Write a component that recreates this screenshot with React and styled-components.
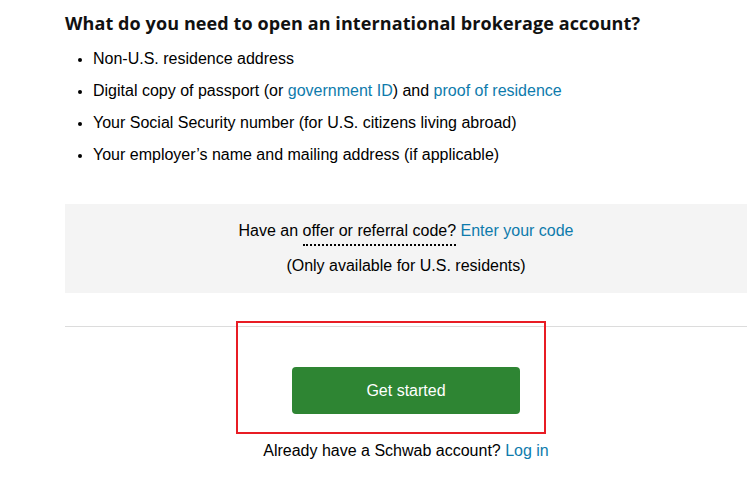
import React from "react";
import styled, { createGlobalStyle } from "styled-components";

const Global = createGlobalStyle`
  html, body { margin: 0; padding: 0; background: #fff; }
  body { font-family: "Liberation Sans", Arial, sans-serif; color: #000; }
`;

const Page = styled.main`
  padding: 12px 0 0 65px;
  width: 747px;
  box-sizing: border-box;
`;

const Heading = styled.h2`
  margin: 0;
  font-family: "Open Sans", "Liberation Sans", Arial, sans-serif;
  font-weight: 700;
  font-size: 18px;
  line-height: 22px;
  letter-spacing: 0.1px;
  color: #111;
`;

const List = styled.ul`
  margin: 15px 0 0;
  padding: 0 0 0 28px;
  font-size: 16px;
  line-height: 20px;
  li { margin-bottom: 12px; }
  li::marker { font-size: 14px; }
`;

const Link = styled.a`
  color: #0e7bac;
  text-decoration: none;
`;

const Promo = styled.section`
  margin-top: 39px;
  background: #f4f4f4;
  height: 89px;
  display: flex;
  flex-direction: column;
  align-items: center;
  padding-top: 17px;
  box-sizing: border-box;
  font-size: 16px;
  line-height: 20px;
`;

const Dotted = styled.span`
  border-bottom: 2px dotted #000;
  padding-bottom: 5px;
`;

const Note = styled.p`
  margin: 15px 0 0;
`;

const Rule = styled.hr`
  margin: 33px 0 0;
  border: none;
  border-top: 1px solid #dcdcdc;
`;

const Actions = styled.div`
  position: relative;
  display: flex;
  flex-direction: column;
  align-items: center;
  padding-top: 40px;
`;

const Highlight = styled.div`
  position: absolute;
  left: 171px;
  top: -6px;
  width: 310px;
  height: 113px;
  border: 2px solid #e81c24;
  box-sizing: border-box;
  pointer-events: none;
`;

const Button = styled.button`
  width: 228px;
  height: 47px;
  background: #2e8533;
  color: #fff;
  border: none;
  border-radius: 4px;
  font-family: "Liberation Sans", Arial, sans-serif;
  font-size: 16px;
  cursor: pointer;
`;

const Login = styled.p`
  margin: 27px 0 0;
  font-size: 16px;
  line-height: 20px;
`;

export default function App() {
  return (
    <>
      <Global />
      <Page>
        <Heading>What do you need to open an international brokerage account?</Heading>
        <List>
          <li>Non-U.S. residence address</li>
          <li>
            Digital copy of passport (or <Link href="#">government ID</Link>) and{" "}
            <Link href="#">proof of residence</Link>
          </li>
          <li>Your Social Security number (for U.S. citizens living abroad)</li>
          <li>Your employer’s name and mailing address (if applicable)</li>
        </List>
        <Promo>
          <div>
            Have an <Dotted>offer or referral code?</Dotted> <Link href="#">Enter your code</Link>
          </div>
          <Note>(Only available for U.S. residents)</Note>
        </Promo>
        <Rule />
        <Actions>
          <Highlight />
          <Button>Get started</Button>
          <Login>
            Already have a Schwab account? <Link href="#">Log in</Link>
          </Login>
        </Actions>
      </Page>
    </>
  );
}
